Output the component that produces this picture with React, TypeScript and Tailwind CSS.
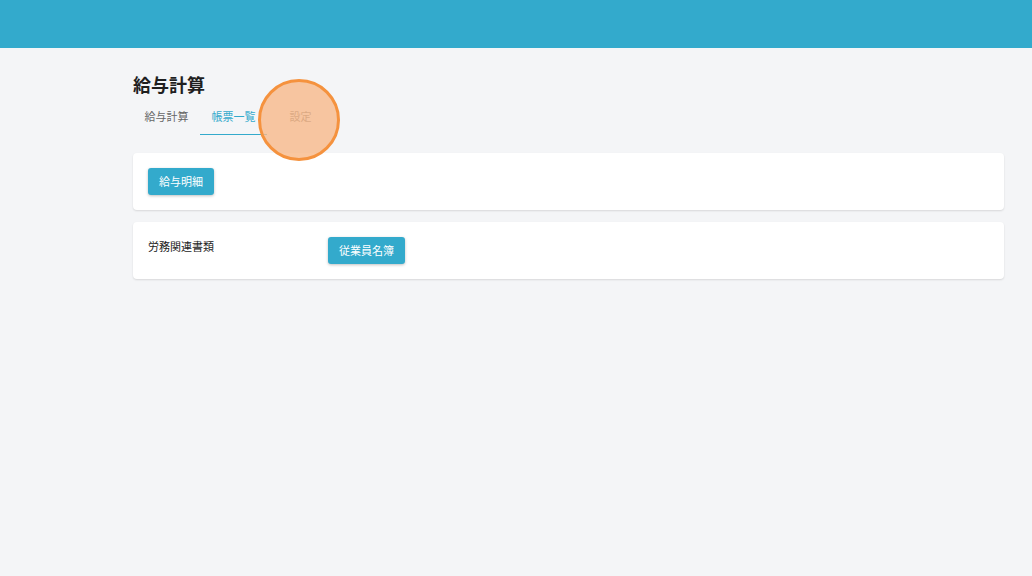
const font = "font-['Noto_Sans_CJK_JP','Noto_Sans',sans-serif]"

const TABS = ['給与計算', '帳票一覧', '設定']

function PrimaryButton({ label }: { label: string }) {
  return (
    <button className="h-[27px] rounded-[3px] bg-[#33aacc] px-[11px] text-[11px] text-white shadow-[0_1px_3px_rgba(0,0,0,0.25)]">
      {label}
    </button>
  )
}

export default function App() {
  const active = 1

  return (
    <div className={`${font} min-h-[576px] w-full bg-[#f4f5f7] text-[#222]`}>
      <header className="h-12 w-full bg-[#33aacc]" />

      <main className="mx-[133px] w-[871px] pt-[22px]">
        <h1 className="text-[18px] font-bold leading-[28px] text-[#1f1f1f]">給与計算</h1>

        {/* tab strip */}
        <div className="relative mt-[8px] flex">
          {TABS.map((t, i) => (
            <div
              key={t}
              className={[
                'flex h-[29px] w-[67px] items-start justify-center pt-[2px] text-[11px]',
                i === active ? 'border-b border-[#33aacc] text-[#33aacc]' : 'text-[#666]',
              ].join(' ')}
            >
              {t}
            </div>
          ))}

          {/* click marker */}
          <div className="absolute left-[125px] top-[-27px] h-[82px] w-[82px] rounded-full border-[3px] border-[#f5923e] bg-[#f7b98a]/80" />
        </div>

        <section className="mt-[18px] flex h-[57px] items-center rounded-[4px] bg-white px-[15px] shadow-[0_1px_2px_rgba(0,0,0,0.12)]">
          <PrimaryButton label="給与明細" />
        </section>

        <section className="mt-3 flex h-[57px] rounded-[4px] bg-white px-[15px] pt-[15px] shadow-[0_1px_2px_rgba(0,0,0,0.12)]">
          <div className="w-[180px] pt-[1px] text-[11px] text-[#222]">労務関連書類</div>
          <PrimaryButton label="従業員名簿" />
        </section>
      </main>
    </div>
  )
}
